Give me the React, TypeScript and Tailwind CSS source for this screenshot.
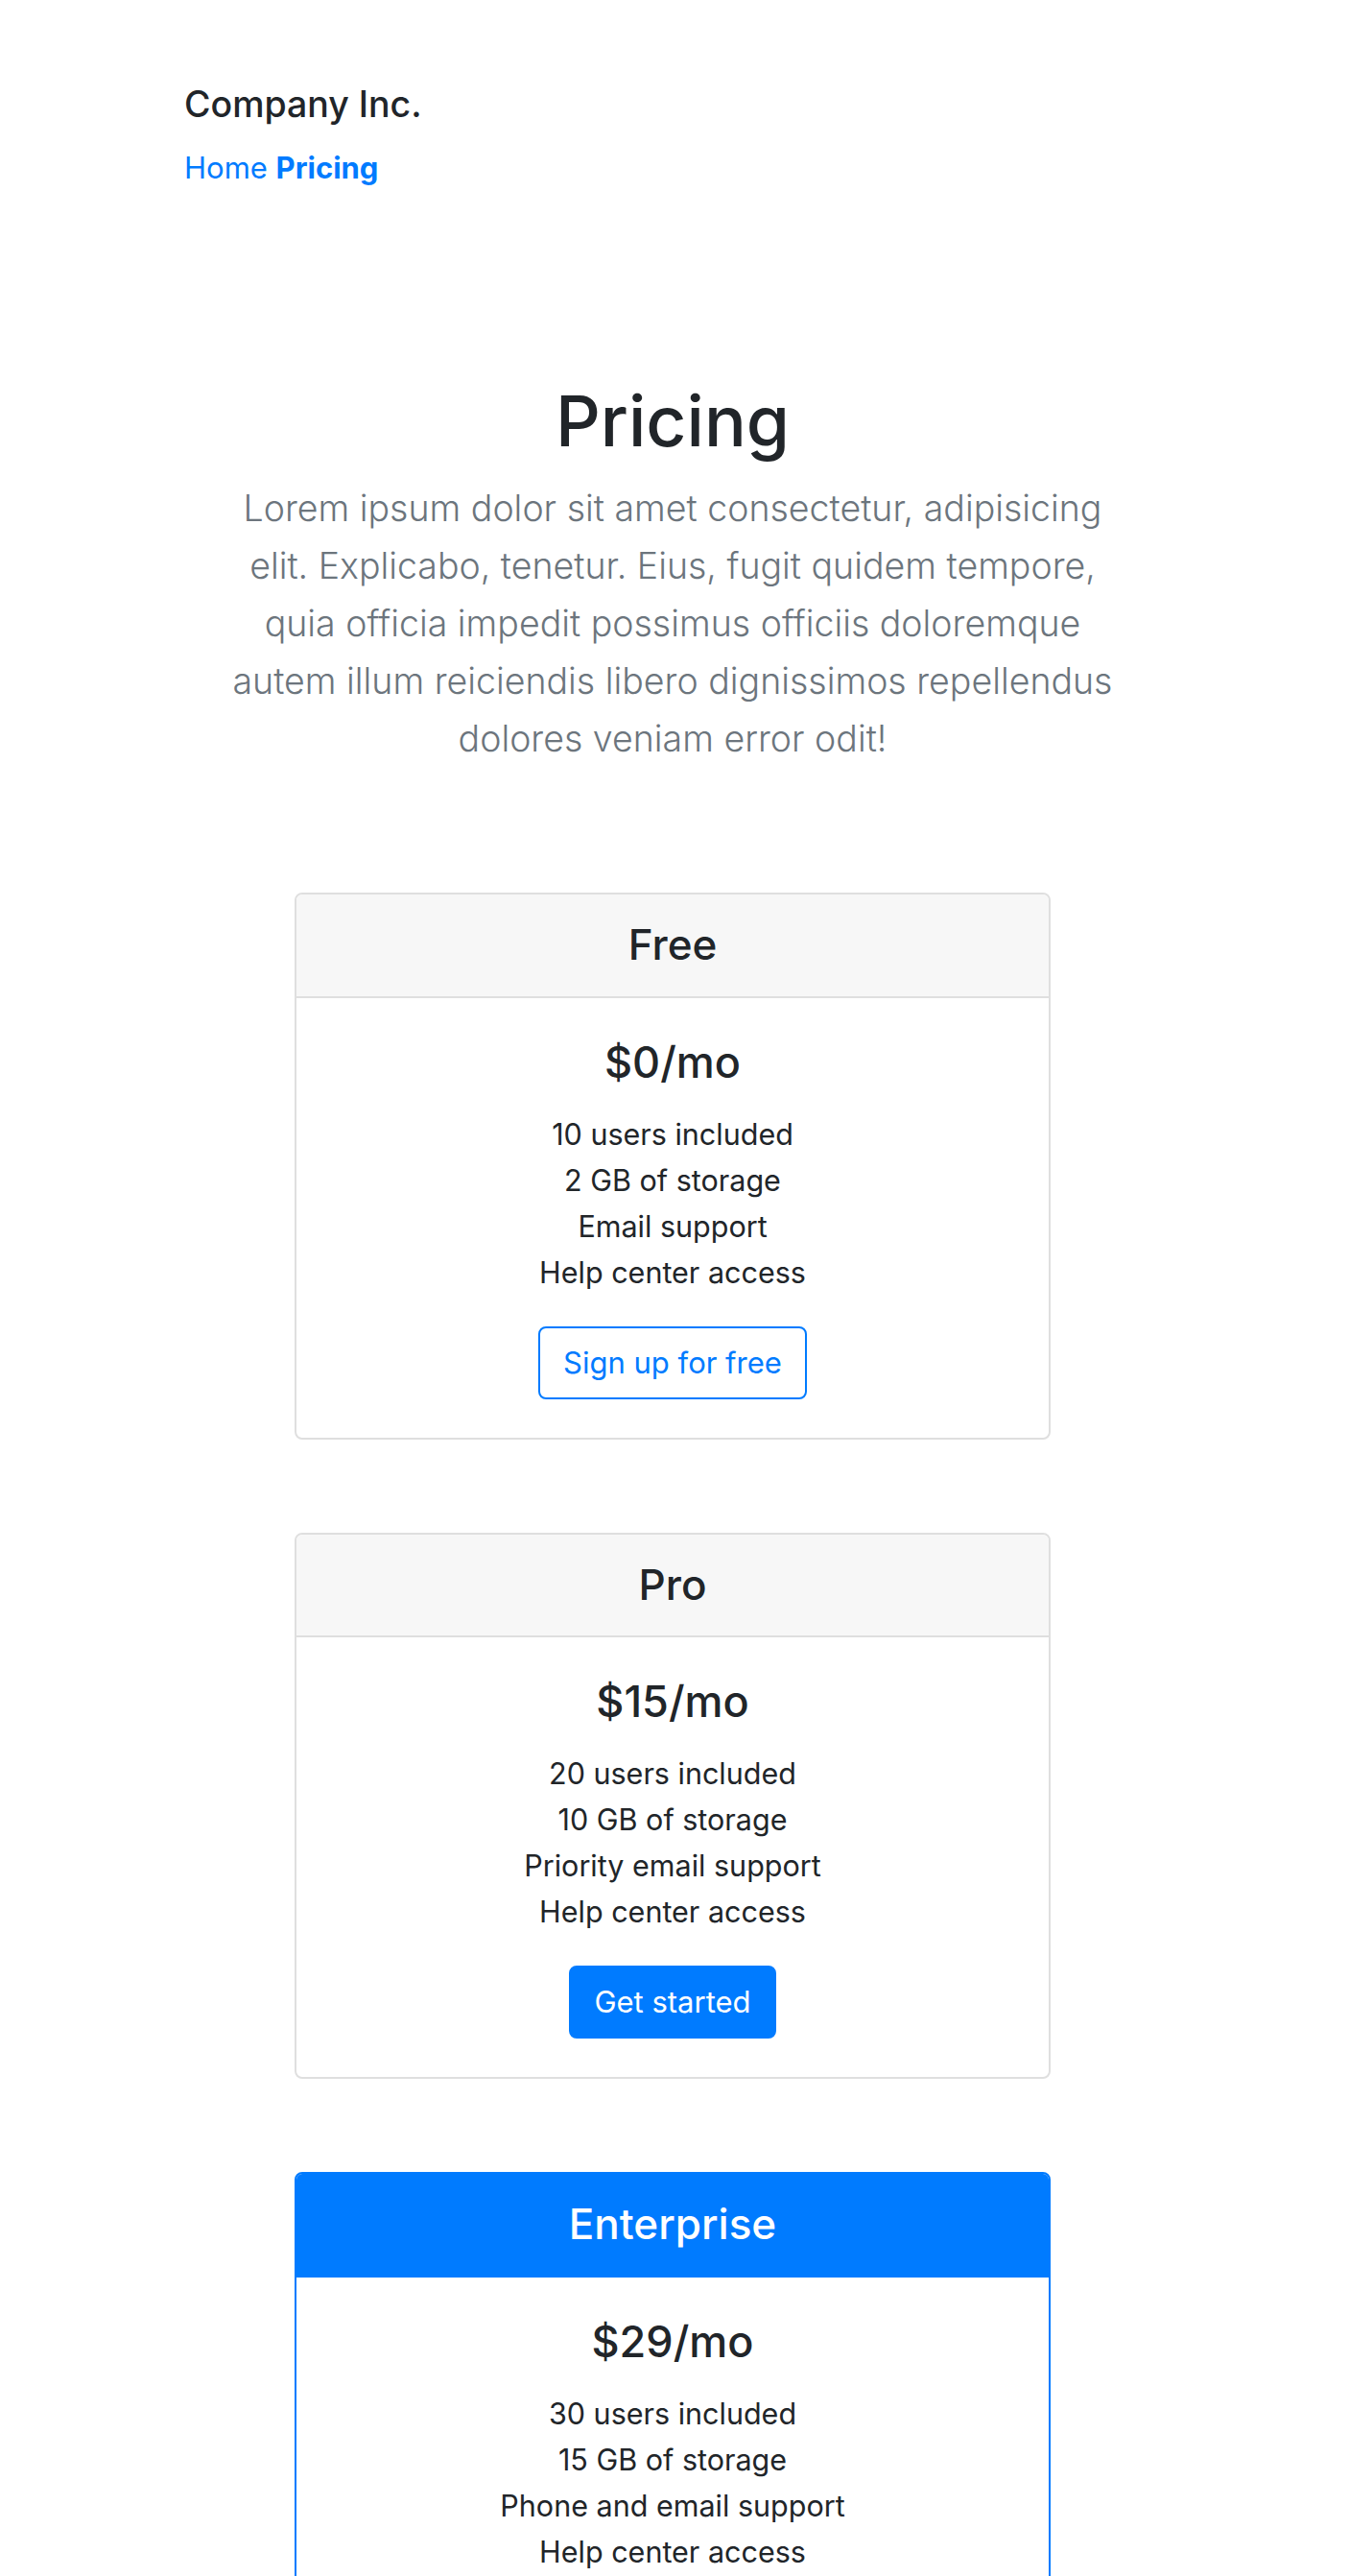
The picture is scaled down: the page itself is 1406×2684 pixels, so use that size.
const plans = [
  {
    name: 'Free',
    price: '$0',
    features: ['10 users included', '2 GB of storage', 'Email support', 'Help center access'],
    cta: 'Sign up for free',
    variant: 'outline',
  },
  {
    name: 'Pro',
    price: '$15',
    features: ['20 users included', '10 GB of storage', 'Priority email support', 'Help center access'],
    cta: 'Get started',
    variant: 'solid',
  },
  {
    name: 'Enterprise',
    price: '$29',
    features: ['30 users included', '15 GB of storage', 'Phone and email support', 'Help center access'],
    cta: 'Contact us',
    variant: 'solid',
    highlight: true,
  },
];

type Plan = (typeof plans)[number];

function PricingCard({ plan }: { plan: Plan }) {
  const hl = 'highlight' in plan && plan.highlight;
  return (
    <div
      className={`w-[788px] rounded-[8px] border-2 overflow-hidden bg-white ${
        hl ? 'border-[#007bff]' : 'border-[#dfdfdf]'
      }`}
    >
      <div
        className={`px-[40px] py-[24px] border-b-2 text-center ${
          hl ? 'bg-[#007bff] border-[#007bff] text-white' : 'bg-[#f7f7f7] border-[#dfdfdf]'
        }`}
      >
        <h4 className="text-[44px] leading-[57.6px] font-medium">{plan.name}</h4>
      </div>
      <div className="p-[40px] text-center">
        <h2 className="text-[45px] leading-[53px] font-medium mb-[25px]">
          {plan.price}/mo
        </h2>
        <ul className="text-[30.5px] leading-[48px] mb-[32px]">
          {plan.features.map((f) => (
            <li key={f}>{f}</li>
          ))}
        </ul>
        {plan.variant === 'outline' ? (
          <button className="border-2 border-[#007bff] rounded-[8px] px-[24px] py-[12px] text-[31px] leading-[48px] text-[#007bff] bg-white">
            {plan.cta}
          </button>
        ) : (
          <button className="border-2 border-[#007bff] rounded-[8px] px-[24px] py-[12px] text-[31px] leading-[48px] text-white bg-[#007bff]">
            {plan.cta}
          </button>
        )}
      </div>
    </div>
  );
}

export default function App() {
  return (
    <div className="h-[2684px] overflow-hidden bg-white text-[#212529] font-[Inter,'Liberation_Sans',sans-serif]">
      {/* Top bar */}
      <header className="pl-[192px] pt-[85px]">
        <h5 className="text-[37.5px] leading-[48px] font-medium">Company Inc.</h5>
        <nav className="mt-[18px] text-[31px] leading-[48px] text-[#007bff]">
          <a href="#">Home</a> <a href="#" className="font-bold">Pricing</a>
        </nav>
      </header>

      {/* Heading */}
      <section className="mt-[192px] pr-[4px] text-center">
        <h1 className="text-[73px] leading-[96px] font-medium">Pricing</h1>
        <p className="mt-[13px] text-[37.5px] leading-[60px] font-light text-[#6c757d]">
          Lorem ipsum dolor sit amet consectetur, adipisicing
          <br />
          elit. Explicabo, tenetur. Eius, fugit quidem tempore,
          <br />
          quia officia impedit possimus officiis doloremque
          <br />
          autem illum reiciendis libero dignissimos repellendus
          <br />
          dolores veniam error odit!
        </p>
      </section>

      {/* Cards */}
      <section className="mt-[130px] pr-[4px] flex flex-col items-center gap-[97px] pb-[100px]">
        {plans.map((p) => (
          <PricingCard key={p.name} plan={p} />
        ))}
      </section>
    </div>
  );
}
